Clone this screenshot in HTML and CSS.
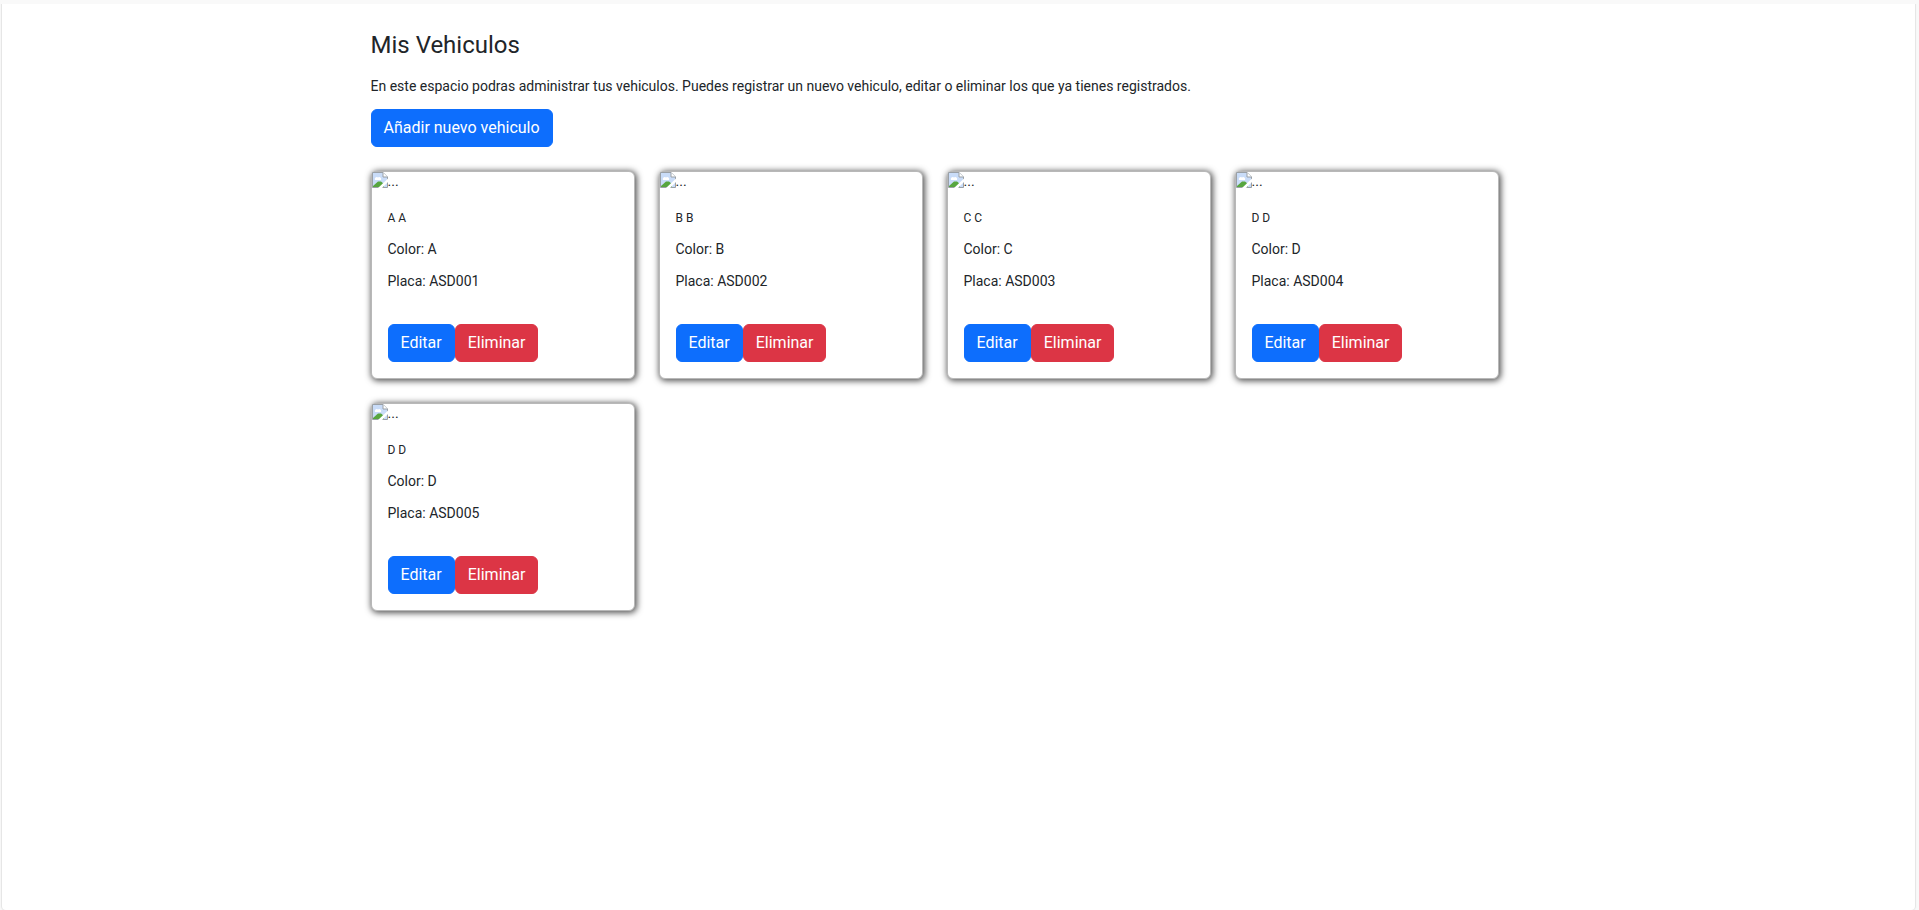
FILE: index.html
```
<!DOCTYPE html>
<html lang="es">
<head>
<meta charset="utf-8">
<meta name="viewport" content="width=device-width, initial-scale=1">
<title>Mis Vehiculos</title>
<link rel="stylesheet" href="styles.css">
</head>
<body>
<svg class="sprite" aria-hidden="true">
  <symbol id="photo" viewBox="0 0 16 16">
    <path d="M.5 .5H11L15.500 5V15.500H.5Z" fill="#c9dcf8"/>
    <path d="M3 8a2 2 0 0 1 3-2.500A2 2 0 0 1 9 8Z" fill="#fff"/>
    <path d="M1 15V14L6 9.500H9L12 12V15Z" fill="#57a63f"/>
    <path d="M.5 15.500V.5H11L15.500 5V15.500Z" fill="none" stroke="#9aa0a6"/>
    <path d="M11 .5V5H15.500" fill="#fff" stroke="#9aa0a6"/>
    <path d="M16 6.500V10L10 16H6Z" fill="#fff"/>
  </symbol>
</svg>
<main class="panel">
  <div class="container">
    <h1 class="title">Mis Vehiculos</h1>
    <p class="intro">En este espacio podras administrar tus vehiculos. Puedes registrar un nuevo vehiculo, editar o eliminar los que ya tienes registrados.</p>
    <button class="btn btn-primary" type="button">Añadir nuevo vehiculo</button>
    <div class="cards">
      <article class="card">
        <div class="photo"><svg class="photo-icon" aria-hidden="true"><use href="#photo"/></svg>...</div>
        <div class="card-body">
          <h2 class="card-title">A A</h2>
          <p class="card-text">Color: A</p>
          <p class="card-text">Placa: ASD001</p>
          <div class="actions"><button class="btn btn-primary" type="button">Editar</button><button class="btn btn-danger" type="button">Eliminar</button></div>
        </div>
      </article>
      <article class="card">
        <div class="photo"><svg class="photo-icon" aria-hidden="true"><use href="#photo"/></svg>...</div>
        <div class="card-body">
          <h2 class="card-title">B B</h2>
          <p class="card-text">Color: B</p>
          <p class="card-text">Placa: ASD002</p>
          <div class="actions"><button class="btn btn-primary" type="button">Editar</button><button class="btn btn-danger" type="button">Eliminar</button></div>
        </div>
      </article>
      <article class="card">
        <div class="photo"><svg class="photo-icon" aria-hidden="true"><use href="#photo"/></svg>...</div>
        <div class="card-body">
          <h2 class="card-title">C C</h2>
          <p class="card-text">Color: C</p>
          <p class="card-text">Placa: ASD003</p>
          <div class="actions"><button class="btn btn-primary" type="button">Editar</button><button class="btn btn-danger" type="button">Eliminar</button></div>
        </div>
      </article>
      <article class="card">
        <div class="photo"><svg class="photo-icon" aria-hidden="true"><use href="#photo"/></svg>...</div>
        <div class="card-body">
          <h2 class="card-title">D D</h2>
          <p class="card-text">Color: D</p>
          <p class="card-text">Placa: ASD004</p>
          <div class="actions"><button class="btn btn-primary" type="button">Editar</button><button class="btn btn-danger" type="button">Eliminar</button></div>
        </div>
      </article>
      <article class="card">
        <div class="photo"><svg class="photo-icon" aria-hidden="true"><use href="#photo"/></svg>...</div>
        <div class="card-body">
          <h2 class="card-title">D D</h2>
          <p class="card-text">Color: D</p>
          <p class="card-text">Placa: ASD005</p>
          <div class="actions"><button class="btn btn-primary" type="button">Editar</button><button class="btn btn-danger" type="button">Eliminar</button></div>
        </div>
      </article>
    </div>
  </div>
</main>
</body>
</html>
```
FILE: styles.css
```
* {
  box-sizing: border-box;
}

body {
  margin: 0;
  min-height: 100vh;
  display: flex;
  padding: 4px 4px 0 2px;
  background: #f9f9f9;
  color: #212529;
  font: 400 14px/20px Roboto, "Liberation Sans", sans-serif;
}

.sprite {
  position: absolute;
  width: 0;
  height: 0;
}

.panel {
  flex: 1;
  padding: 25px 0 24px;
  background: #fff;
  border-radius: 0 0 4px 4px;
  box-shadow: 0 0 1px 1px #e4e4e4;
  clip-path: inset(0 -3px 0 -3px);
}

.container {
  max-width: 1200px;
  margin: 0 auto;
  padding: 0 12px;
}

.title {
  margin: 0 0 15px;
  font-size: 24px;
  line-height: 32px;
  font-weight: 400;
}

.intro {
  margin: 0 0 13px;
}

.btn {
  padding: 6px 12px;
  border: 1px solid transparent;
  border-radius: 6px;
  color: #fff;
  font: 400 16px/24px Roboto, "Liberation Sans", sans-serif;
  cursor: pointer;
}

.btn-primary {
  background: #0d6efd;
  border-color: #0d6efd;
}

.btn-danger {
  background: #dc3545;
  border-color: #dc3545;
}

.cards {
  display: grid;
  grid-template-columns: repeat(auto-fill, 264px);
  gap: 24px;
  margin-top: 24px;
}

.card {
  background: #fff;
  border: 1px solid #b8b8b8;
  border-radius: 6px;
  box-shadow: 1px 1px 6px 1px #555;
}

.photo {
  display: flex;
  height: 20px;
  line-height: 18px;
}

.photo-icon {
  width: 16px;
  height: 16px;
}

.card-body {
  padding: 16px;
}

.card-title {
  margin: 0 0 11px;
  font-size: 12px;
  line-height: 20px;
  font-weight: 400;
}

.card-text {
  margin: 0 0 12px;
}

.actions {
  display: flex;
  margin-top: 33px;
}
```
